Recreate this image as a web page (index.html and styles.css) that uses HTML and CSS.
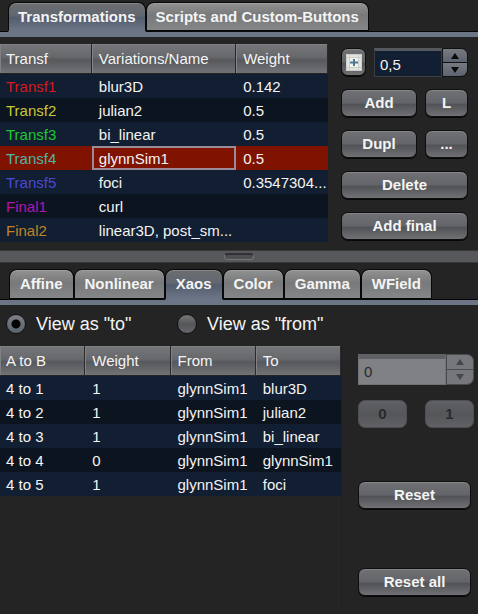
FILE: index.html
```html
<!DOCTYPE html>
<html lang="en">
<head>
<meta charset="utf-8">
<title>Transformations</title>
<link rel="stylesheet" href="styles.css">
</head>
<body>
<div class="tabs tabs-main" role="tablist">
  <button class="tab selected" role="tab" aria-selected="true">Transformations</button>
  <button class="tab" role="tab">Scripts and Custom-Buttons</button>
</div>
<main>
  <section class="pane pane-transforms">
    <div class="table-area">
      <table class="grid transforms">
        <colgroup><col class="c-transf"><col class="c-name"><col></colgroup>
        <thead><tr><th>Transf</th><th>Variations/Name</th><th>Weight</th></tr></thead>
        <tbody>
          <tr><td class="red">Transf1</td><td>blur3D</td><td>0.142</td></tr>
          <tr><td class="yellow">Transf2</td><td>julian2</td><td>0.5</td></tr>
          <tr><td class="green">Transf3</td><td>bi_linear</td><td>0.5</td></tr>
          <tr class="current"><td class="teal">Transf4</td><td class="focus">glynnSim1</td><td>0.5</td></tr>
          <tr><td class="blue">Transf5</td><td>foci</td><td>0.3547304...</td></tr>
          <tr><td class="purple">Final1</td><td>curl</td><td></td></tr>
          <tr><td class="orange">Final2</td><td>linear3D, post_sm...</td><td></td></tr>
        </tbody>
      </table>
    </div>
    <div class="side side-transforms">
      <div class="row weight-row">
        <button class="btn icon-btn" aria-label="Toggle variations">
          <svg width="16" height="17" viewBox="0 0 16 17">
            <path fill="#e4e5df" d="M0 0h16v17H0z"/>
            <path stroke="#cbcdc8" fill="none" d="M.5.5h15v16H.5zM3.5 1v15M12.5 1v15M1 3.5h14M1 13.5h14"/>
            <path fill="#f3f3ed" d="M4 4h8v9H4z"/>
            <path stroke="#507698" stroke-width="2" d="M8 5v7M4 8.5h8"/>
          </svg>
        </button>
        <div class="spinner">
          <input type="text" value="0,5" aria-label="Weight">
          <div class="steps">
            <button aria-label="Increase weight"><svg width="8" height="6" viewBox="0 0 8 6"><path d="M4 0l4 6H0z"/></svg></button>
            <button aria-label="Decrease weight"><svg width="8" height="6" viewBox="0 0 8 6"><path d="M0 0h8L4 6z"/></svg></button>
          </div>
        </div>
      </div>
      <div class="row"><button class="btn grow">Add</button><button class="btn small">L</button></div>
      <div class="row"><button class="btn grow">Dupl</button><button class="btn small">...</button></div>
      <button class="btn">Delete</button>
      <button class="btn">Add final</button>
    </div>
  </section>
  <div class="splitter" role="separator"><span class="grip"></span></div>
  <div class="tabs tabs-sub" role="tablist">
    <button class="tab" role="tab">Affine</button>
    <button class="tab" role="tab">Nonlinear</button>
    <button class="tab selected" role="tab" aria-selected="true">Xaos</button>
    <button class="tab" role="tab">Color</button>
    <button class="tab" role="tab">Gamma</button>
    <button class="tab" role="tab">WField</button>
  </div>
  <div class="views">
    <label><input type="radio" name="view" checked>View as "to"</label>
    <label><input type="radio" name="view">View as "from"</label>
  </div>
  <section class="pane pane-xaos">
    <div class="table-area">
      <table class="grid xaos">
        <colgroup><col class="c-quarter"><col class="c-quarter"><col class="c-quarter"><col></colgroup>
        <thead><tr><th>A to B</th><th>Weight</th><th>From</th><th>To</th></tr></thead>
        <tbody>
          <tr><td>4 to 1</td><td>1</td><td>glynnSim1</td><td>blur3D</td></tr>
          <tr><td>4 to 2</td><td>1</td><td>glynnSim1</td><td>julian2</td></tr>
          <tr><td>4 to 3</td><td>1</td><td>glynnSim1</td><td>bi_linear</td></tr>
          <tr><td>4 to 4</td><td>0</td><td>glynnSim1</td><td>glynnSim1</td></tr>
          <tr><td>4 to 5</td><td>1</td><td>glynnSim1</td><td>foci</td></tr>
        </tbody>
      </table>
    </div>
    <div class="side side-xaos">
      <div class="spinner disabled">
        <input type="text" value="0" aria-label="Xaos value" disabled>
        <div class="steps">
          <button aria-label="Increase value" disabled><svg width="8" height="6" viewBox="0 0 8 6"><path d="M4 0l4 6H0z"/></svg></button>
          <button aria-label="Decrease value" disabled><svg width="8" height="6" viewBox="0 0 8 6"><path d="M0 0h8L4 6z"/></svg></button>
        </div>
      </div>
      <div class="row presets"><button class="btn" disabled>0</button><button class="btn" disabled>1</button></div>
      <div class="resets"><button class="btn">Reset</button><button class="btn">Reset all</button></div>
    </div>
  </section>
</main>
</body>
</html>
```
FILE: styles.css
```css
* { box-sizing: border-box; }

body {
  margin: 0;
  min-height: 100vh;
  display: flex;
  flex-direction: column;
  background: #242424;
  color: #f4f4f4;
  font: 15px/24px "Liberation Sans", Arial, sans-serif;
}

main { flex: 1; display: flex; flex-direction: column; }
button, input { font: inherit; color: inherit; margin: 0; padding: 0; }
svg { display: block; }

/* Tabs */
.tabs {
  display: flex;
  border-bottom: 5px solid #6c7586;
  box-shadow: inset 0 -1px #050505;
}
.tabs-main { padding: 2px 0 0 8px; height: 37px; }
.tabs-sub { padding: 6px 0 0 9px; height: 42px; }

.tab {
  border: 1px solid #080808;
  border-width: 1px 1px 2px;
  border-radius: 8px 8px 0 0;
  background: linear-gradient(#929292, #78797a 45%, #858688);
  box-shadow: inset 0 1px #a0a0a0;
  font-weight: bold;
  padding: 0 10px;
  white-space: nowrap;
}
.tabs-main .tab { padding: 0 9px; }
.tab.selected {
  background: linear-gradient(#6c6d70, #626871 45%, #535d6d 55%, #6c7586);
  box-shadow: inset 0 1px #88898c;
  border-bottom-color: #6c7586;
}

/* Tables */
.pane { display: flex; }
.table-area { flex: 1; min-width: 0; }
.pane-transforms { padding: 7px 10px 8px 0; }
.pane-transforms .table-area { margin-right: 13px; }

.grid {
  width: 100%;
  table-layout: fixed;
  border-collapse: separate;
  border-spacing: 0;
  white-space: nowrap;
}
.c-transf { width: 28%; }
.c-name { width: 44%; }
.c-quarter { width: 25%; }

th, td { text-align: left; font-weight: normal; overflow: hidden; }
th {
  height: 30px;
  padding: 0 7px;
  background: linear-gradient(#76777a, #67686b 45%, #57585b 55%, #727376);
  border-right: 1px solid #2a2a2c;
  border-bottom: 1px solid #242424;
  box-shadow: inset 1px 1px #808184;
}
td { height: 24px; padding: 2px 7px 0; line-height: 22px; background: #121e31; }
th:first-child, td:first-child { padding-left: 6px; }
tr:nth-child(even) td { background: #0c141f; }
tr.current td { background: #7f1300; }
td.focus { box-shadow: inset 0 0 0 2px #9a8a9c; }

.red { color: #d61a22; }
.yellow { color: #c8c832; }
.green { color: #1fc832; }
.teal { color: #50b4aa; }
.blue { color: #4848d8; }
.purple { color: #b414b4; }
.orange { color: #c08428; }

/* Side controls */
.side { display: flex; flex-direction: column; flex: none; }
.side-transforms { width: 127px; gap: 13px; padding-top: 4px; }
.row { display: flex; gap: 8px; }
.weight-row { margin-bottom: -1px; }

.btn {
  height: 28px;
  border: 1px solid #0e0e0e;
  border-radius: 7px;
  background: linear-gradient(#707174, #64656a 48%, #525357 56%, #707174);
  box-shadow: inset 0 1px #858689, 0 1px #080808;
  font-weight: bold;
}
.grow { flex: 1; }
.small { width: 43px; }
.icon-btn { width: 25px; display: grid; place-items: center; flex: none; }
.btn:disabled {
  border-color: #4e4f51;
  background: linear-gradient(#606164, #555659 50%, #606164);
  box-shadow: none;
  color: #292a2c;
}

.spinner { display: flex; flex: 1; min-width: 0; height: 29px; }
.spinner input {
  flex: 1;
  min-width: 0;
  padding: 2px 0 0 5px;
  border: 1px solid #3a3d44;
  border-top: 3px solid #55585f;
  border-radius: 0;
  background: #121e31;
}
.steps { width: 26px; display: flex; flex-direction: column; }
.steps button {
  flex: 1;
  display: grid;
  place-items: center;
  border: 1px solid #121212;
  background: linear-gradient(#777a80, #5c6370);
}
.steps button:first-child { border-radius: 0 7px 0 0; }
.steps button:last-child { border-radius: 0 0 7px; border-top: 0; }
.steps path { fill: #090909; }

.spinner.disabled { flex: none; height: 31px; }
.disabled input { padding-top: 0; background: #808184; border-color: #707174; border-top: 5px solid #606164; color: #292a2c; }
.disabled .steps { width: 28px; }
.disabled .steps button { background: #75777b; border-color: #4a4b4e; }
.disabled .steps path { fill: #46474b; }

/* Divider between the panes */
.splitter {
  height: 13px;
  display: grid;
  place-items: center;
  background: #57585c;
  border: 1px solid #38383a;
  border-width: 1px 0;
}
.grip {
  width: 30px;
  height: 7px;
  border: 1px solid #747578;
  border-top: 2px solid #303134;
  border-radius: 4px;
  background: #4e4f53;
}

/* View choice */
.views { display: flex; height: 41px; padding: 0 6px 4px; font-size: 18px; }
.views label { width: 171px; display: flex; align-items: center; gap: 10px; white-space: nowrap; }
.views input {
  appearance: none;
  flex: none;
  width: 20px;
  height: 20px;
  border: 1px solid #101010;
  border-radius: 50%;
  background: linear-gradient(#77787a, #55565a 50%, #66676a);
}
.views input:checked { background: radial-gradient(circle, #030303 4px, transparent 5px), linear-gradient(#7d8084, #5b6472); }

/* Xaos editor */
.pane-xaos { flex: 1; padding-right: 4px; }
.pane-xaos .table-area { border-right: 1px solid #202020; margin-right: 16px; }
.side-xaos { width: 116px; padding-top: 8px; }
.presets { justify-content: space-between; margin-top: 15px; }
.presets .btn { width: 49px; }
.resets { display: flex; flex-direction: column; gap: 59px; margin: 53px 3px 0 0; }
```
